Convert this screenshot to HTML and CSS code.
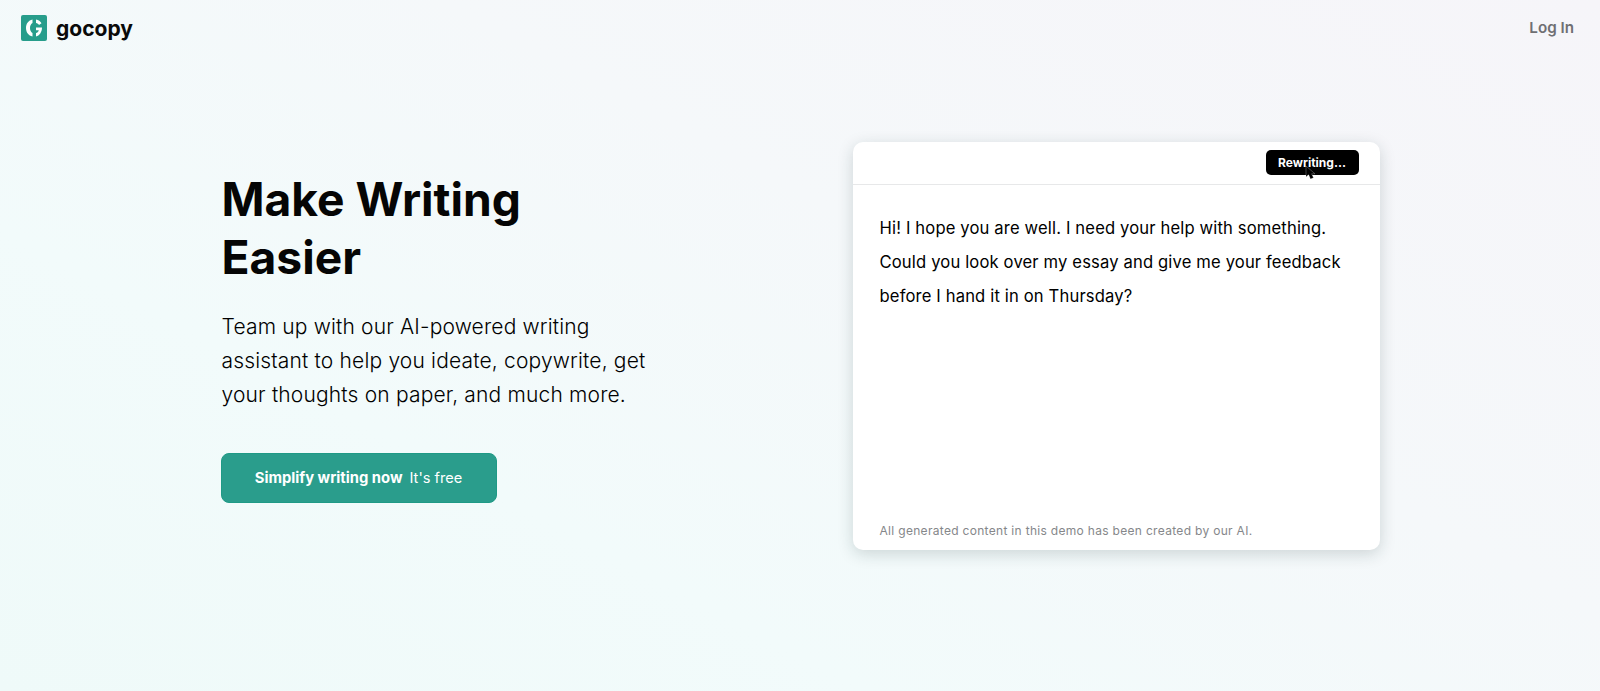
FILE: index.html
```html
<!DOCTYPE html>
<html lang="en">
<head>
    <meta charset="UTF-8">
    <meta name="viewport" content="width=device-width, initial-scale=1.0">
    <title>gocopy</title>
    <link rel="stylesheet" href="styles.css">
</head>
<body>
    <header class="topbar">
        <a class="brand" href="#">
            <svg class="brand-icon" viewBox="0 0 26 26" aria-hidden="true">
                <rect width="26" height="26" rx="2" fill="#279d8b"/>
                <path d="M11.500 4.500C7.500 5.500 5 8.500 5 13s2.500 7.500 6.500 8.500V18C10 17 9 15.500 9 13s1-4 2.500-5z" fill="#fff"/>
                <path d="M15 4.500c2.500.4 4.500 1.800 5.500 3.800L18 10c-.6-1-1.600-1.700-3-2zM15 12.500h6c0 4.500-2.500 8.200-6 9V18c1.500-.4 2.500-1.400 2.800-2.800H15z" fill="#fff"/>
            </svg>
            <span class="brand-name">gocopy</span>
        </a>
        <a class="login" href="#">Log In</a>
    </header>

    <main class="hero">
        <section class="hero-copy">
            <h1>Make Writing<br>Easier</h1>
            <p>Team up with our AI-powered writing assistant to help you ideate, copywrite, get your thoughts on paper, and much more.</p>
            <a class="cta" href="#"><strong>Simplify writing now</strong><span>It's free</span></a>
        </section>

        <section class="demo">
            <div class="demo-top">
                <button class="rewrite" type="button">Rewriting...</button>
                <svg class="cursor" viewBox="0 0 12 14" aria-hidden="true">
                    <path d="M1 0v11l2.600-2.400L5.500 13l3-1.300-1.900-3.900H10z" fill="#000" stroke="#fff" stroke-width=".25"/>
                </svg>
            </div>
            <div class="demo-body">
                <p>Hi! I hope you are well. I need your help with something. Could you look over my essay and give me your feedback before I hand it in on Thursday?</p>
                <small>All generated content in this demo has been created by our AI.</small>
            </div>
        </section>
    </main>
</body>
</html>
```

FILE: styles.css
```css
* {
    box-sizing: border-box;
}

body {
    margin: 0;
    min-height: 691px;
    font-family: 'Inter', 'Liberation Sans', sans-serif;
    color: #0a0a0a;
    background: linear-gradient(208deg, #f6f5f9 0%, #f5f8fa 40%, #f2fbfb 70%, #effaf9 100%);
    overflow: hidden;
}

a {
    text-decoration: none;
}

.topbar {
    display: flex;
    justify-content: space-between;
    align-items: center;
    height: 56px;
    padding: 0 26px 0 21px;
}

.brand {
    display: flex;
    align-items: center;
    gap: 9px;
    color: #0a0a0a;
}

.brand-icon {
    width: 26px;
    height: 26px;
}

.brand-name {
    font-size: 21px;
    font-weight: 700;
}

.login {
    font-size: 15.2px;
    font-weight: 600;
    color: #6f6f73;
    margin-top: -2px;
}

.hero {
    display: flex;
    justify-content: space-between;
    align-items: flex-start;
    width: 1159px;
    margin: 86px auto 0;
}

.hero-copy {
    width: 440px;
    padding: 28px 0 0 1px;
}

.hero-copy h1 {
    margin: 0;
    font-size: 46.2px;
    line-height: 58px;
    font-weight: 700;
    color: #050505;
}

.hero-copy p {
    margin: 24px 0 0;
    font-size: 21px;
    line-height: 34px;
    font-weight: 300;
    letter-spacing: 0.17px;
    color: #000;
}

.cta {
    display: inline-flex;
    align-items: center;
    justify-content: center;
    gap: 7px;
    width: 276px;
    height: 50px;
    margin: 41px 0 0 -1px;
    border: 1px solid #1f9a86;
    border-radius: 8px;
    background-color: #2a9d8c;
    color: #fff;
    font-size: 14.6px;
}

.cta strong {
    font-size: 14.8px;
    font-weight: 700;
}

.demo {
    width: 527px;
    height: 408px;
    display: flex;
    flex-direction: column;
    background: #fff;
    border-radius: 10px;
    box-shadow: 0 4px 16px rgba(20, 50, 50, 0.18);
}

.demo-top {
    position: relative;
    display: flex;
    justify-content: flex-end;
    height: 43px;
    padding: 8px 21px 0 0;
    border-bottom: 1px solid #e7e8e9;
}

.rewrite {
    width: 93px;
    height: 25px;
    padding: 0;
    border: 0;
    border-radius: 5px;
    background: #000;
    color: #fff;
    font-family: inherit;
    font-size: 12px;
    font-weight: 700;
}

.cursor {
    position: absolute;
    top: 24px;
    right: 63px;
    width: 12px;
    height: 14px;
}

.demo-body {
    flex: 1;
    display: flex;
    flex-direction: column;
    justify-content: space-between;
    padding: 26px 27px 11px;
}

.demo-body p {
    margin: 0;
    font-size: 16.6px;
    line-height: 34px;
    letter-spacing: 0.15px;
    color: #000;
}

.demo-body small {
    font-size: 12px;
    line-height: 16px;
    letter-spacing: 0.31px;
    color: #85878a;
}
```
